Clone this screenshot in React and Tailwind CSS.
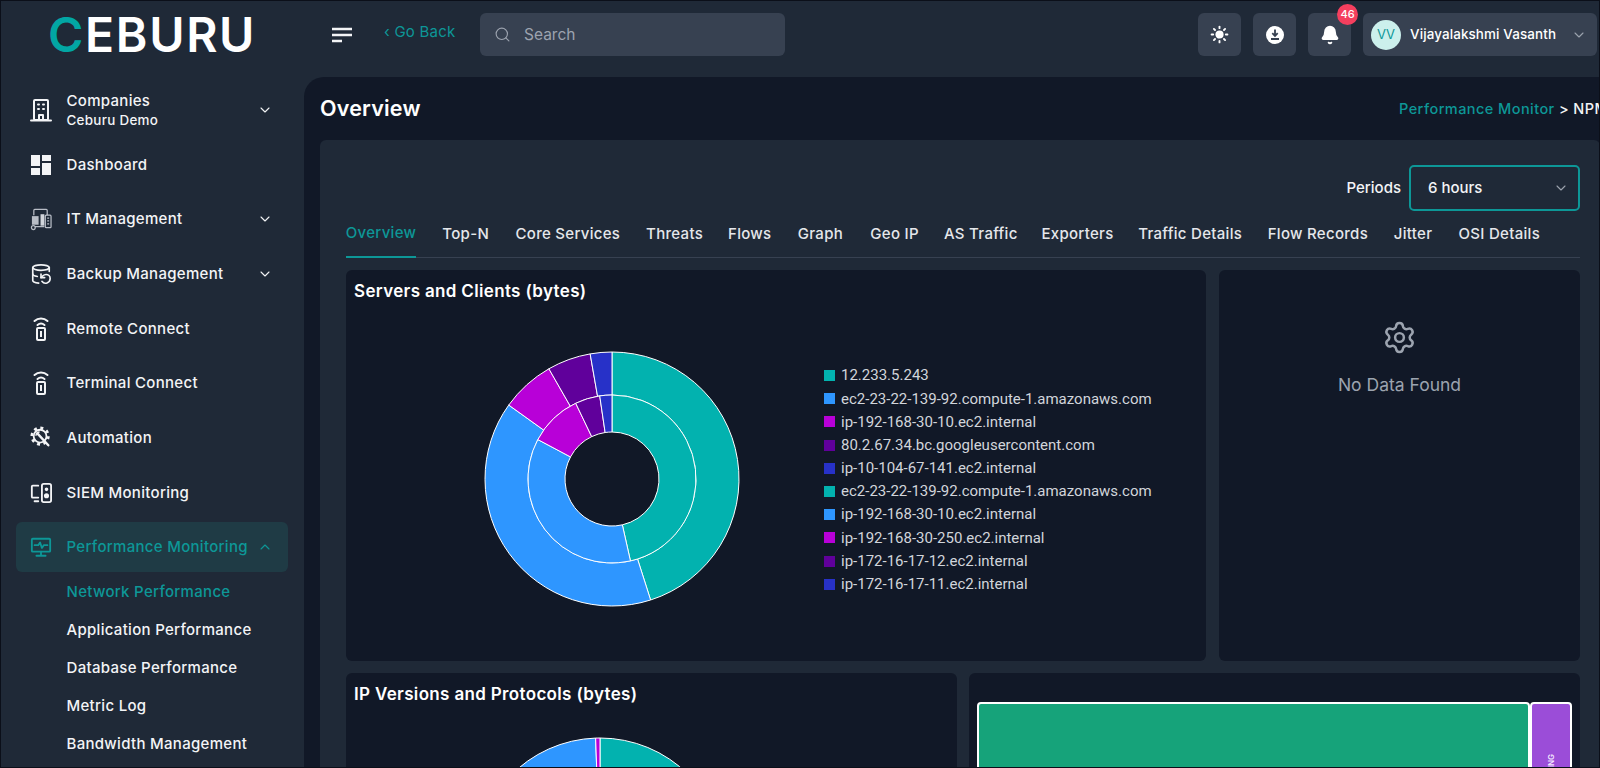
import { Bell, ChevronDown, ChevronUp, DatabaseBackup, Search, Settings, Sun } from 'lucide-react'

const TEAL = '#02B2AF'
const BLUE = '#2E96FF'
const MAGENTA = '#B800D8'
const PURPLE = '#60009B'
const INDIGO = '#2731C8'

const OUTER = [
  { color: TEAL, from: 0, to: 162.3 },
  { color: BLUE, from: 162.3, to: 305.6 },
  { color: MAGENTA, from: 305.6, to: 330.2 },
  { color: PURPLE, from: 330.2, to: 350.1 },
  { color: INDIGO, from: 350.1, to: 360 },
]
const INNER = [
  { color: TEAL, from: 0, to: 167.3 },
  { color: BLUE, from: 167.3, to: 298 },
  { color: MAGENTA, from: 298, to: 334.4 },
  { color: PURPLE, from: 334.4, to: 351.6 },
  { color: INDIGO, from: 351.6, to: 360 },
]

const LEGEND = [
  ['12.233.5.243', TEAL],
  ['ec2-23-22-139-92.compute-1.amazonaws.com', BLUE],
  ['ip-192-168-30-10.ec2.internal', MAGENTA],
  ['80.2.67.34.bc.googleusercontent.com', PURPLE],
  ['ip-10-104-67-141.ec2.internal', INDIGO],
  ['ec2-23-22-139-92.compute-1.amazonaws.com', TEAL],
  ['ip-192-168-30-10.ec2.internal', BLUE],
  ['ip-192-168-30-250.ec2.internal', MAGENTA],
  ['ip-172-16-17-12.ec2.internal', PURPLE],
  ['ip-172-16-17-11.ec2.internal', INDIGO],
]

const TABS = [
  ['Overview', 'w-[70px]'], ['Top-N', 'w-[48px]'], ['Core Services', 'w-[105px]'], ['Threats', 'w-[57px]'],
  ['Flows', 'w-[42px]'], ['Graph', 'w-[48px]'], ['Geo IP', 'w-[49px]'], ['AS Traffic', 'w-[72px]'],
  ['Exporters', 'w-[70px]'], ['Traffic Details', 'w-[104px]'], ['Flow Records', 'w-[100px]'], ['Jitter', 'w-[39px]'], ['OSI Details', 'w-[82px]'],
]

function point(cx, cy, r, deg) {
  const a = (deg - 90) * Math.PI / 180
  return `${cx + r * Math.cos(a)} ${cy + r * Math.sin(a)}`
}

function arc(cx, cy, r0, r1, from, to) {
  const large = to - from > 180 ? 1 : 0
  return `M${point(cx, cy, r1, from)} A${r1} ${r1} 0 ${large} 1 ${point(cx, cy, r1, to)} L${point(cx, cy, r0, to)} A${r0} ${r0} 0 ${large} 0 ${point(cx, cy, r0, from)} Z`
}

function Ring({ segs, cx, cy, r0, r1 }) {
  return segs.map(s => (
    <path key={s.from} d={arc(cx, cy, r0, r1, s.from, s.to)} fill={s.color} stroke="#fff" strokeWidth="1" />
  ))
}

const stroke = { fill: 'none', stroke: 'currentColor', strokeWidth: 2, strokeLinecap: 'round', strokeLinejoin: 'round' }

function CompanyIcon() {
  return (
    <svg width="22" height="24" viewBox="0 0 22 24" {...stroke}>
      <rect x="4" y="2" width="14" height="20" rx="1" />
      <path d="M1 22.5h20M9 22v-5h4v5M8 6.5h1M13 6.5h1M8 11h1M13 11h1" />
    </svg>
  )
}

function DashIcon() {
  return (
    <svg width="22" height="22" viewBox="0 0 22 22" fill="currentColor">
      <rect x="1" y="1" width="9" height="11" />
      <rect x="12" y="1" width="9" height="6" />
      <rect x="1" y="14" width="9" height="7" />
      <rect x="12" y="9" width="9" height="12" />
    </svg>
  )
}

function ItIcon() {
  return (
    <svg width="23" height="24" viewBox="0 0 23 24" fill="none" stroke="#b8bdc6" strokeWidth="1.3">
      <path d="M4 8V3a1 1 0 0 1 1-1h12a1 1 0 0 1 1 1v5" />
      <rect x="2" y="9" width="7" height="9" fill="#b8bdc6" stroke="none" />
      <rect x="11" y="7" width="4" height="12" fill="#d1d5db" stroke="none" />
      <rect x="16" y="8" width="6" height="13" rx="1" />
      <path d="M18 11h2M18 14h2M18 17h2M5 20h10" />
      <circle cx="3.5" cy="21" r="2" />
    </svg>
  )
}

function RemoteIcon() {
  return (
    <svg width="22" height="26" viewBox="0 0 22 26" {...stroke}>
      <path d="M4.5 5a9.5 9.5 0 0 1 13 0M7.5 9a5.5 5.5 0 0 1 7 0" />
      <rect x="7" y="12" width="8" height="12" rx="1" />
      <rect x="10" y="15" width="2" height="6" fill="currentColor" stroke="none" />
    </svg>
  )
}

function AutomationIcon() {
  return (
    <svg width="24" height="25" viewBox="0 0 24 25" fill="none" stroke="currentColor">
      <circle cx="11" cy="11" r="7" strokeWidth="2" />
      <circle cx="11" cy="11" r="9" strokeWidth="3" strokeDasharray="3.2 3.87" />
      <path d="M8 8l12 13" strokeWidth="2.6" strokeLinecap="round" />
      <path d="M6.5 10.5a4 4 0 0 1 4-4" strokeWidth="1.6" />
    </svg>
  )
}

function SiemIcon() {
  return (
    <svg width="24" height="22" viewBox="0 0 24 22" {...stroke}>
      <path d="M9 3H3a1 1 0 0 0-1 1v11a1 1 0 0 0 1 1h6M5 20h4" />
      <rect x="13" y="1" width="10" height="20" rx="2" />
      <circle cx="18" cy="7" r="1" fill="currentColor" />
      <circle cx="18" cy="14" r="1.8" fill="currentColor" />
    </svg>
  )
}

function PerfIcon() {
  return (
    <svg width="24" height="22" viewBox="0 0 24 22" {...stroke}>
      <rect x="2" y="2" width="20" height="14" rx="1" />
      <path d="M5 9h4l2-3 2 6 2-3h4M12 16v4M7 20.5h10" />
    </svg>
  )
}

function NavRow({ icon, label, sub, chevron, labelClass }) {
  return (
    <div className="flex h-[54.7px] items-center pl-[14px] pr-[15px] text-[#f3f4f6]">
      <span className="flex w-[22px] shrink-0 justify-center">{icon}</span>
      <div className={`ml-[14.5px] flex-1 text-[15px] font-medium leading-[20px] tracking-[0.02em] ${labelClass || ''}`}>
        {label}
        {sub && <div className="mt-[1px] text-[13.4px] leading-[16px]">{sub}</div>}
      </div>
      {chevron && <ChevronDown size={16} strokeWidth={1.6} />}
    </div>
  )
}

function Sidebar() {
  return (
    <aside className="w-[303px] shrink-0 pl-[15px] pr-[16px] pt-[5.5px]">
      <NavRow icon={<CompanyIcon />} label="Companies" sub="Ceburu Demo" chevron />
      <NavRow icon={<DashIcon />} label="Dashboard" />
      <NavRow icon={<ItIcon />} label="IT Management" labelClass="-ml-px" chevron />
      <NavRow icon={<DatabaseBackup size={24} strokeWidth={1.8} />} label="Backup Management" chevron />
      <NavRow icon={<RemoteIcon />} label="Remote Connect" />
      <NavRow icon={<RemoteIcon />} label="Terminal Connect" />
      <NavRow icon={<AutomationIcon />} label="Automation" />
      <NavRow icon={<SiemIcon />} label="SIEM Monitoring" />
      <div className="flex h-[54.7px] items-center">
        <div className="flex h-[50px] w-full items-center rounded-md bg-[#1f3b45] pl-[14px] pr-[15px] text-[#0d9797]">
          <span className="flex w-[22px] shrink-0 justify-center"><PerfIcon /></span>
          <span className="ml-[14.5px] flex-1 whitespace-nowrap text-[15px] font-medium tracking-[0.02em]">Performance Monitoring</span>
          <ChevronUp size={16} strokeWidth={1.6} />
        </div>
      </div>
      <div className="-mt-[1px] pl-[50.5px] text-[15px] font-medium tracking-[0.02em] text-[#f3f4f6]">
        <div className="flex h-[38px] items-center text-[#0d9797]">Network Performance</div>
        <div className="flex h-[38px] items-center">Application Performance</div>
        <div className="flex h-[38px] items-center">Database Performance</div>
        <div className="flex h-[38px] items-center">Metric Log</div>
        <div className="flex h-[38px] items-center">Bandwidth Management</div>
      </div>
    </aside>
  )
}

function Header() {
  return (
    <header className="flex h-[76px] shrink-0 items-start pt-[12px]">
      <div className="ml-[47px] mt-[-3px] w-[284px] text-[48px] font-semibold leading-[49px] tracking-[0.035em] text-white">
        <span className="text-[#02a6a4]">C</span>EBURU
      </div>
      <svg width="20" height="16" viewBox="0 0 20 16" className="mt-[14px]" fill="none" stroke="#f3f4f6" strokeWidth="2.4">
        <path d="M0 2h20M0 8h20M0 14h10" />
      </svg>
      <span className="ml-[32px] mt-[8px] w-[96px] text-[15px] font-normal tracking-[0.015em] text-[#0d9797]">‹ Go Back</span>
      <div className="flex h-[43px] w-[305px] items-center rounded-md bg-[#374151] pl-[14px] text-[15.5px] text-[#9ca3af]">
        <Search size={17} strokeWidth={1.6} />
        <span className="ml-[13px] mt-px">Search</span>
      </div>
      <div className="ml-auto flex gap-[12px] pr-[2px] text-white">
        <div className="flex h-[43px] w-[43px] items-center justify-center rounded-md bg-[#374151]">
          <Sun size={19} fill="#fff" strokeWidth={2.4} />
        </div>
        <div className="flex h-[43px] w-[43px] items-center justify-center rounded-md bg-[#374151]">
          <svg width="18" height="18" viewBox="0 0 18 18">
            <circle cx="9" cy="9" r="9" fill="#fff" />
            <path d="M9 3.5v6M6.3 7.2L9 10l2.7-2.8M5 13h8" fill="none" stroke="#374151" strokeWidth="1.8" />
          </svg>
        </div>
        <div className="relative flex h-[43px] w-[43px] items-center justify-center rounded-md bg-[#374151]">
          <Bell size={20} fill="#fff" strokeWidth={2} />
          <span className="absolute left-[29px] top-[-9px] flex h-[21px] w-[21px] items-center justify-center rounded-full bg-[#f43f5e] text-[11px] font-medium text-white">46</span>
        </div>
        <div className="flex h-[43px] w-[234px] items-center rounded-md bg-[#374151] pl-[8px]">
          <span className="flex h-[30px] w-[30px] items-center justify-center rounded-full bg-[#ccf0ec] text-[13px] text-[#0d9797]">VV</span>
          <span className="ml-[9px] flex-1 whitespace-nowrap text-[13.4px] font-medium tracking-[0.01em]">Vijayalakshmi Vasanth</span>
          <ChevronDown size={16} strokeWidth={1.6} className="mr-[10px] text-[#9ca3af]" />
        </div>
      </div>
    </header>
  )
}

function ServersPanel() {
  return (
    <section className="w-[860px] shrink-0 rounded-md bg-[#111827] pl-[8px] pt-[9px]">
      <h3 className="text-[17px] font-semibold leading-[24px] tracking-[0.02em] text-white">Servers and Clients (bytes)</h3>
      <div className="mt-[46px] flex">
        <svg width="260" height="260" viewBox="0 0 260 260" className="ml-[128px] shrink-0">
          <Ring segs={OUTER} cx={130} cy={130} r0={84} r1={127} />
          <Ring segs={INNER} cx={130} cy={130} r0={47} r1={84} />
        </svg>
        <ul className="ml-[82px] mt-[15px] font-[Roboto,sans-serif] text-[15px] text-[#d1d5db]">
          {LEGEND.map(([label, color], i) => (
            <li key={i} className="flex h-[23.2px] items-center whitespace-nowrap">
              <span className="mr-[6px] h-[11px] w-[11px] shrink-0" style={{ background: color }} />
              {label}
            </li>
          ))}
        </ul>
      </div>
    </section>
  )
}

function NoData() {
  return (
    <section className="flex flex-1 flex-col items-center rounded-md bg-[#111827] pt-[50px] text-[#9ca3af]">
      <Settings size={35} strokeWidth={1.7} />
      <span className="mt-[19px] text-[17.5px] leading-[22px]">No Data Found</span>
    </section>
  )
}

function BottomRow() {
  return (
    <div className="mt-[12px] flex h-[400px] gap-[12px]">
      <section className="w-[611px] shrink-0 rounded-md bg-[#111827] pl-[8px] pt-[9px]">
        <h3 className="text-[17px] font-semibold leading-[24px] tracking-[0.02em] text-white">IP Versions and Protocols (bytes)</h3>
        <svg width="260" height="260" viewBox="0 0 260 260" className="ml-[116px] mt-[27px]">
          <path d={arc(130, 130, 47, 125, 0, 180)} fill={TEAL} stroke="#fff" strokeWidth="1" />
          <path d={arc(130, 130, 47, 125, 180, 358)} fill={BLUE} stroke="#fff" strokeWidth="1" />
          <path d={arc(130, 130, 47, 125, 358, 360)} fill={MAGENTA} stroke="#fff" strokeWidth="1" />
        </svg>
      </section>
      <section className="flex-1 rounded-md bg-[#111827] px-[8px] pt-[29px]">
        <div className="flex h-[300px]">
          <div className="flex-1 rounded-[4px] border-2 border-white bg-[#16a37a]" />
          <div className="flex w-[42px] shrink-0 items-start justify-center rounded-[4px] border-2 border-white bg-[#9b4dd8] pt-[50px]">
            <span className="rotate-180 text-[8px] font-semibold leading-[10px] text-[#f3e8ff] [writing-mode:vertical-rl]">STREAMING</span>
          </div>
        </div>
      </section>
    </div>
  )
}

export default function App() {
  return (
    <div className="box-border flex h-[768px] w-[1600px] flex-col overflow-hidden border border-[#0b0f19] bg-[#1f2937] font-[Inter,sans-serif]">
      <Header />
      <div className="flex min-h-0 flex-1">
        <Sidebar />
        <main className="w-[1296px] shrink-0 rounded-tl-[20px] bg-[#111827] pl-[16px]">
          <div className="flex h-[63px] w-[1260px] items-center justify-between">
            <h1 className="text-[21.5px] font-semibold tracking-[0.01em] text-white">Overview</h1>
            <div className="w-[181px] shrink-0 whitespace-nowrap text-[14.5px] font-medium tracking-[0.03em] text-[#f3f4f6]">
              <span className="text-[#0d9797]">Performance Monitor</span> &gt; NPM
            </div>
          </div>
          <div className="w-[1280px] rounded-t-md bg-[#1f2937] pl-[26px] pr-[20px] pt-[25px]">
            <div className="flex items-center justify-end">
              <span className="mr-[8px] text-[15px] font-medium text-[#f3f4f6]">Periods</span>
              <div className="flex h-[46px] w-[171px] items-center justify-between rounded-[5px] border-2 border-[#0d9797] pl-[17px] pr-[9px] text-[15px] font-medium text-[#f3f4f6]">
                6 hours
                <ChevronDown size={16} strokeWidth={1.6} className="text-[#9ca3af]" />
              </div>
            </div>
            <nav className="mt-[5px] flex h-[42px] gap-[25.7px] border-b border-[#374151] text-[15px] font-medium tracking-[0.02em] text-[#e5e7eb]">
              {TABS.map(([label, width], i) => (
                <span key={label} className={`-mb-px flex ${width} items-center justify-center whitespace-nowrap pb-[5px] ${i === 0 ? 'border-b-2 border-[#0d9797] text-[#0d9797]' : ''}`}>{label}</span>
              ))}
            </nav>
            <div className="mt-[12px] flex h-[391px] gap-[13px]">
              <ServersPanel />
              <NoData />
            </div>
            <BottomRow />
          </div>
        </main>
      </div>
    </div>
  )
}
